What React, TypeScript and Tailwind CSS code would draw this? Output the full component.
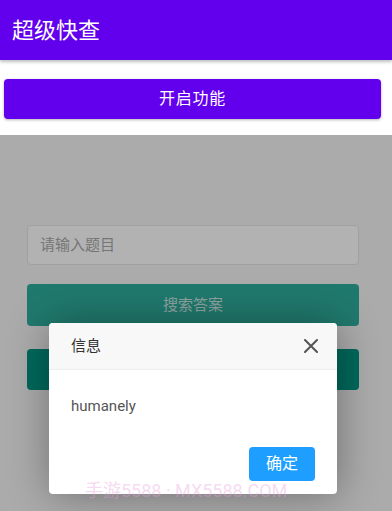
const font = { fontFamily: 'Roboto, "Noto Sans CJK SC", sans-serif' };

const App = () => {
    return (
        <div className="w-[392px] h-[511px] flex flex-col overflow-hidden bg-white relative" style={font}>
            {/* app bar */}
            <div className="h-[60px] bg-[#6200ee] flex items-center px-3 shadow-[0_2px_3px_rgba(0,0,0,0.25)] z-10">
                <h1 className="text-[22px] text-white font-normal">超级快查</h1>
            </div>

            {/* native button area */}
            <div className="h-[75px] bg-white flex items-center px-1">
                <button className="w-[377px] h-[40px] mt-[2px] rounded bg-[#6200ee] text-white text-[16px] tracking-wider shadow-[0_1px_3px_rgba(0,0,0,0.3)]">
                    开启功能
                </button>
            </div>

            {/* webview with layer */}
            <div className="flex-1 relative bg-[#f5f5f5]">
                <div className="w-[332px] ml-[27px] flex flex-col pt-[90px] gap-[19px]">
                    <div className="h-[40px] bg-white border border-[#e6e6e6] rounded-sm flex items-center px-3 text-[15px] text-[#aaaaaa]">
                        请输入题目
                    </div>
                    <button className="h-[42px] rounded-sm bg-[#2fae9d] text-white/75 text-[15px]">搜索答案</button>
                    <button className="h-[41px] mt-[4px] rounded-sm bg-[#009683] text-white text-[15px]">查看记录</button>
                </div>

                {/* shade */}
                <div className="absolute inset-0 bg-black/30" />

                {/* dialog */}
                <div className="absolute left-[49px] top-[188px] w-[288px] h-[171px] bg-white rounded-sm shadow-[1px_1px_40px_rgba(0,0,0,0.35)] flex flex-col">
                    <div className="h-[47px] bg-[#f8f8f8] border-b border-[#eeeeee] flex items-center justify-between pl-[22px] pr-[19px] rounded-t-sm">
                        <span className="text-[15px] text-[#333]">信息</span>
                        <svg width="14" height="14" viewBox="0 0 14 14" className="text-[#555]">
                            <path d="M1 1L13 13M13 1L1 13" stroke="currentColor" strokeWidth="2" strokeLinecap="round" />
                        </svg>
                    </div>
                    <div className="px-[22px] pt-[25px] text-[15px] text-[#555] flex-1">humanely</div>
                    <div className="flex justify-end pr-[22px] pb-[13px]">
                        <button className="w-[66px] h-[34px] bg-[#1e9fff] text-white text-[16px] rounded-sm">确定</button>
                    </div>
                </div>
            </div>

            {/* watermark */}
            <div className="absolute left-[85px] top-[477px] text-[18px] text-[#e8a0e0]/40 pointer-events-none whitespace-nowrap">
                手游5588 · MX5588.COM
            </div>
        </div>
    );
};

export default App;
